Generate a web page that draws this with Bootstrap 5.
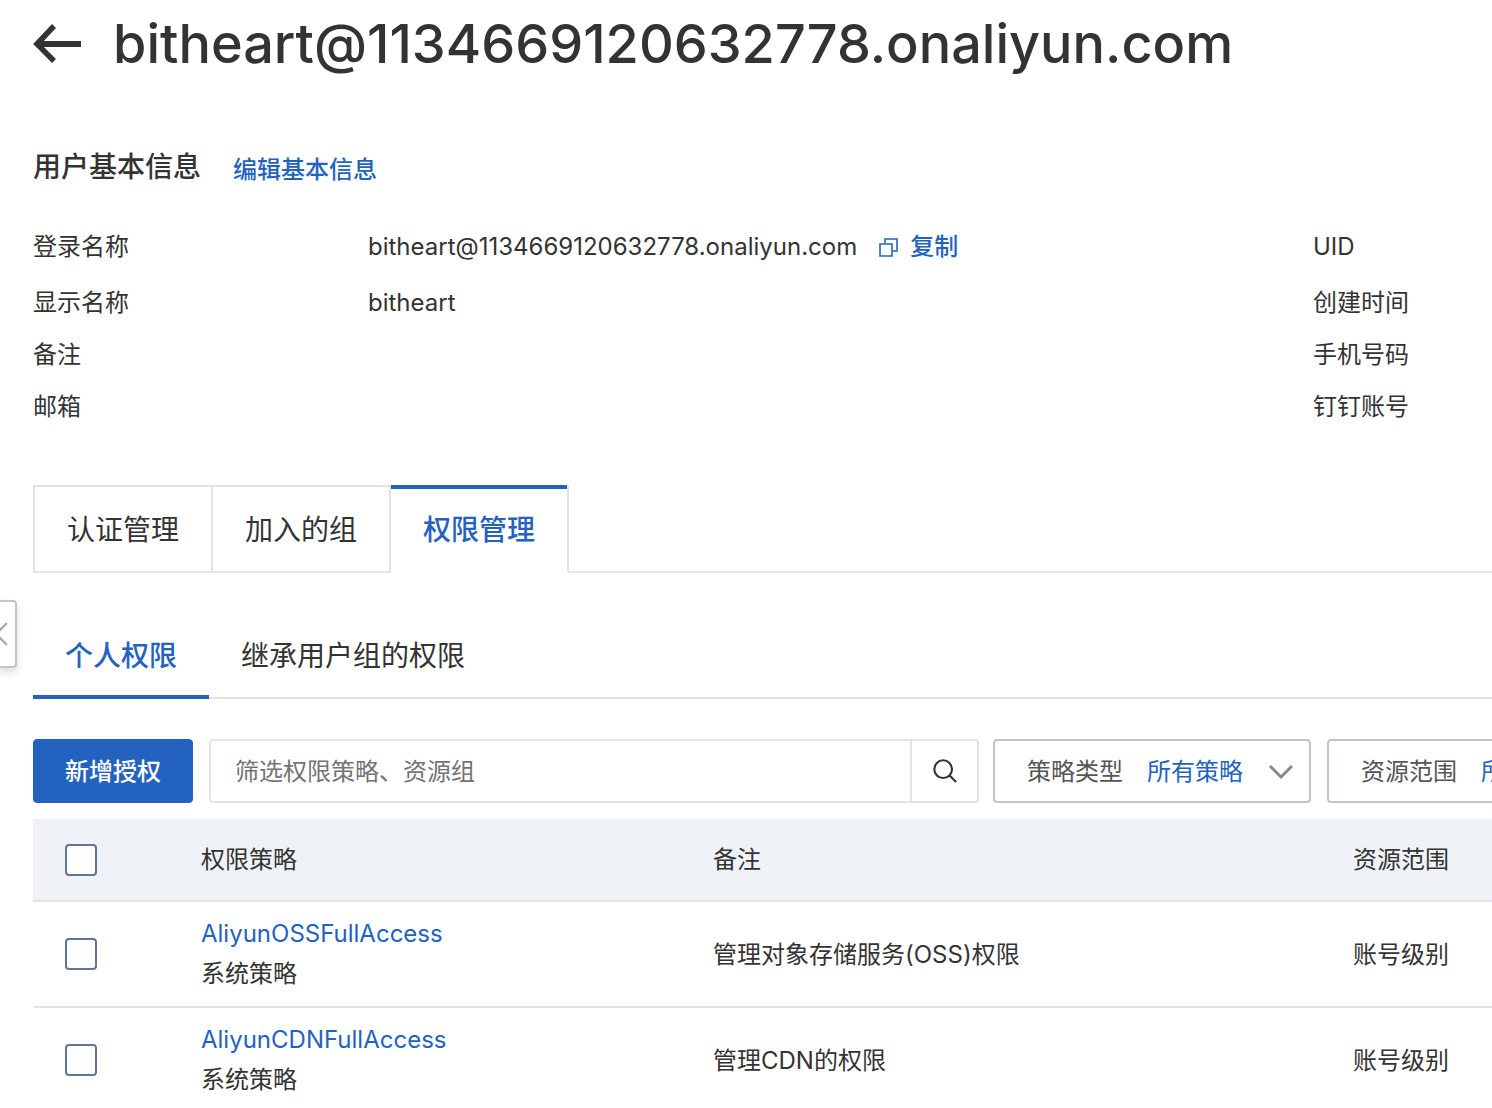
<!DOCTYPE html>
<html lang="zh-CN">
<head>
<meta charset="utf-8">
<meta name="viewport" content="width=device-width, initial-scale=1">
<title>bitheart - RAM 用户</title>
<link rel="stylesheet" href="https://cdn.jsdelivr.net/npm/bootstrap@5.3.0/dist/css/bootstrap.min.css">
<style>
:root { --ink: #333; --brand: #2462c0; --line: #e3e4e6; --line-strong: #c0c4cc; }
body { font-family: Inter, "Noto Sans CJK SC", sans-serif; font-size: 24px; line-height: 40px; color: var(--ink); background: #fff; }
a, .copy-btn { color: var(--brand); text-decoration: none; }
.console { height: 100vh; padding-left: 33px; }
.page-title { font-size: 54px; line-height: 88px; font-weight: 500; }
.back-btn { width: 48px; height: 40px; color: var(--ink); }
.title-row { gap: 32px; }
.info-head { gap: 32px; margin-top: 59px; }
.info-head h2 { font-size: 28px; line-height: 40px; font-weight: 500; }
.info-head a { line-height: 34px; font-weight: 500; }
.info-list { display: grid; grid-template-columns: 335px 1fr 179px; grid-template-rows: 60px 52px 52px 52px; align-items: center; margin-top: 30px; }
.info-list dt { font-weight: 400; }
.copy-btn { font-size: 24px; line-height: 40px; font-weight: 500; gap: 12px; margin-left: 22px; }
.main-tabs { border-bottom: 2px solid var(--line); margin-top: 52px; }
.main-tabs .nav-link { height: 88px; margin: 0 0 -2px; padding: 2px 32px 0; border: 2px solid var(--line); border-left-width: 0; border-radius: 0; font-size: 28px; color: var(--ink); }
.main-tabs .nav-item:first-child .nav-link { border-left-width: 2px; }
.main-tabs .nav-link.active { padding-top: 4px; color: var(--brand); font-weight: 500; border-top: 0; border-bottom-color: #fff; box-shadow: inset 0 4px var(--brand); background: #fff; }
.sub-tabs { border-bottom: 2px solid var(--line); margin-top: 40px; }
.sub-tabs .nav-link { height: 86px; margin-bottom: -2px; padding: 4px 32px 0; border: 0; border-bottom: 4px solid transparent; border-radius: 0; font-size: 28px; color: var(--ink); background: none; }
.sub-tabs .nav-link.active { color: var(--brand); font-weight: 500; border-bottom-color: var(--brand); background: none; }
.toolbar { gap: 16px; margin-top: 40px; }
.toolbar > * { height: 64px; flex: none; }
.grant-btn { width: 160px; padding: 2px 0 0; font-size: 24px; font-weight: 500; border-radius: 4px; --bs-btn-bg: var(--brand); --bs-btn-border-color: var(--brand); }
.search-box { width: 770px; margin-right: -2px; }
.search-box .form-control { height: 64px; border: 2px solid var(--line); border-radius: 4px 0 0 4px; padding: 0 24px; font-size: 24px; }
.search-box .form-control::placeholder { color: #737373; opacity: 1; }
.search-box .btn { width: 68px; height: 64px; padding: 0; border: 2px solid var(--line); border-left-width: 1px; border-radius: 0 4px 4px 0; color: var(--ink); }
.filter-box { width: 318px; border: 2px solid var(--line-strong); border-radius: 4px; padding: 2px 0 0 32px; gap: 24px; color: #555; }
.filter-box .form-select { flex: 1; height: 58px; border: 0; padding: 0 48px 0 0; font-size: 24px; color: var(--brand); background: transparent url("data:image/svg+xml,%3Csvg xmlns='http://www.w3.org/2000/svg' width='24' height='16' viewBox='0 0 24 16'%3E%3Cpath d='M1 2 12 13 23 2' fill='none' stroke='%23888' stroke-width='3'/%3E%3C/svg%3E") no-repeat right 16px center; background-size: 24px 16px; }
.policy-table { table-layout: fixed; border-collapse: separate; border-spacing: 0; margin-top: 16px; color: var(--ink); }
.policy-table > :not(caption) > * > * { padding: 12px 16px; border-bottom: 2px solid var(--line); color: var(--ink); background: #fff; box-shadow: none; vertical-align: middle; }
.policy-table > thead > tr > th { height: 83px; font-weight: 400; background: #eff3f8; }
.policy-table > * > tr > :first-child { padding-left: 32px; }
.policy-table > tbody > tr > td:nth-child(n+3) { padding-top: 14px; }
.policy-table .form-check-input { display: block; width: 32px; height: 32px; margin: 0; border: 2px solid #5f7695; border-radius: 4px; background-color: #fff; }
.col-tick { width: 152px; } .col-policy { width: 512px; } .col-scope { width: 155px; }
.side-handle { left: -2px; top: 600px; width: 19px; height: 68px; border: 2px solid var(--line-strong); border-radius: 0 4px 4px 0; background: #fff; box-shadow: 0 4px 8px rgba(0,0,0,.14); }
</style>
<script src="https://cdn.jsdelivr.net/npm/bootstrap@5.3.0/dist/js/bootstrap.bundle.min.js" defer></script>
</head>
<body>
<main class="console position-relative overflow-hidden">
  <header class="title-row d-flex align-items-center">
    <button type="button" class="back-btn btn p-0 border-0 d-flex" aria-label="返回">
      <svg width="48" height="40" viewBox="0 0 48 40" fill="none" stroke="currentColor"><path d="M4 20H48" stroke-width="6"/><path d="M21 2 4 20 21 37" stroke-width="5.5"/></svg>
    </button>
    <h1 class="page-title mb-0 text-nowrap">bitheart@1134669120632778.onaliyun.com</h1>
  </header>

  <div class="info-head d-flex align-items-end">
    <h2 class="mb-0">用户基本信息</h2>
    <a href="#">编辑基本信息</a>
  </div>
  <dl class="info-list mb-0">
    <dt>登录名称</dt>
    <dd class="mb-0 d-flex align-items-center">bitheart@1134669120632778.onaliyun.com
      <button type="button" class="copy-btn btn p-0 border-0 d-flex align-items-center">
        <svg width="19" height="19" viewBox="0 0 19 19" fill="none" stroke="currentColor" stroke-width="1.6"><path d="M1 6H13V18H1Z"/><path d="M6 5V1H18V13H14"/></svg>
        <span>复制</span>
      </button>
    </dd>
    <dt>UID</dt>
    <dt>显示名称</dt><dd class="mb-0">bitheart</dd><dt>创建时间</dt>
    <dt>备注</dt><dd class="mb-0"></dd><dt>手机号码</dt>
    <dt>邮箱</dt><dd class="mb-0"></dd><dt>钉钉账号</dt>
  </dl>

  <ul class="main-tabs nav nav-tabs">
    <li class="nav-item"><button type="button" class="nav-link">认证管理</button></li>
    <li class="nav-item"><button type="button" class="nav-link">加入的组</button></li>
    <li class="nav-item"><button type="button" class="nav-link active" aria-current="page">权限管理</button></li>
  </ul>
  <ul class="sub-tabs nav">
    <li class="nav-item"><button type="button" class="nav-link active" aria-current="page">个人权限</button></li>
    <li class="nav-item"><button type="button" class="nav-link">继承用户组的权限</button></li>
  </ul>

  <div class="toolbar d-flex">
    <button type="button" class="grant-btn btn btn-primary">新增授权</button>
    <form class="search-box input-group flex-nowrap">
      <input type="text" class="form-control" placeholder="筛选权限策略、资源组" aria-label="筛选权限策略、资源组">
      <button type="button" class="btn d-flex align-items-center justify-content-center" aria-label="搜索">
        <svg width="24" height="24" viewBox="0 0 26 26" fill="none" stroke="currentColor" stroke-width="2.3"><circle cx="11" cy="11" r="9.6"/><path d="M18 18 25 25"/></svg>
      </button>
    </form>
    <div class="filter-box d-flex align-items-center text-nowrap">
      <label for="policyType">策略类型</label>
      <select id="policyType" class="form-select"><option>所有策略</option></select>
    </div>
    <div class="filter-box d-flex align-items-center text-nowrap">
      <label for="scope">资源范围</label>
      <select id="scope" class="form-select"><option>所有范围</option></select>
    </div>
  </div>

  <table class="policy-table table mb-0">
    <colgroup><col class="col-tick"><col class="col-policy"><col><col class="col-scope"></colgroup>
    <thead>
      <tr><th><input class="form-check-input" type="checkbox" aria-label="全选"></th><th>权限策略</th><th>备注</th><th>资源范围</th></tr>
    </thead>
    <tbody>
      <tr>
        <td><input class="form-check-input" type="checkbox" aria-label="AliyunOSSFullAccess"></td>
        <td><a href="#">AliyunOSSFullAccess</a><div>系统策略</div></td>
        <td>管理对象存储服务(OSS)权限</td><td>账号级别</td>
      </tr>
      <tr>
        <td><input class="form-check-input" type="checkbox" aria-label="AliyunCDNFullAccess"></td>
        <td><a href="#">AliyunCDNFullAccess</a><div>系统策略</div></td>
        <td>管理CDN的权限</td><td>账号级别</td>
      </tr>
    </tbody>
  </table>

  <button type="button" class="side-handle position-absolute p-0 d-flex align-items-center" aria-label="收起侧栏">
    <svg width="8" height="24" viewBox="0 0 8 24" fill="none" stroke="#aaa" stroke-width="2.4"><path d="M7 1-4 12 7 23"/></svg>
  </button>
</main>
</body>
</html>
